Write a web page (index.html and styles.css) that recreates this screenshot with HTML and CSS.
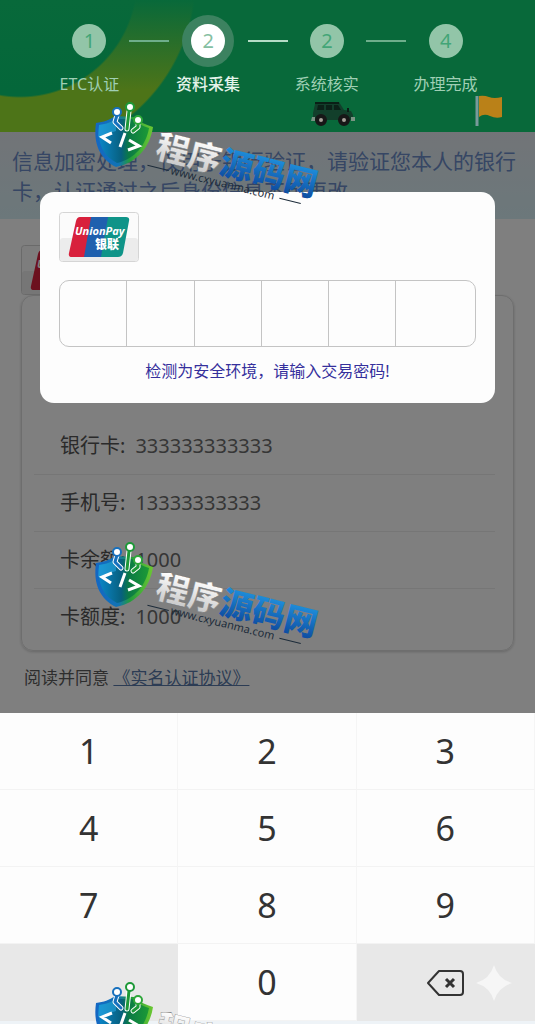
FILE: index.html
```html
<!DOCTYPE html>
<html lang="zh-CN">
<head>
    <meta charset="utf-8">
    <meta name="viewport" content="width=device-width, initial-scale=1.0">
    <title>资料采集</title>
    <link rel="stylesheet" href="styles.css">
</head>
<body>
    <!-- shared drawings -->
    <svg class="defs" aria-hidden="true">
        <defs>
            <linearGradient id="shield-fill" x1="0" y1="0" x2="1" y2="0">
                <stop offset="0" stop-color="#0b86c9"/>
                <stop offset="0.45" stop-color="#07607f"/>
                <stop offset="0.6" stop-color="#0b7a45"/>
                <stop offset="1" stop-color="#1c9a35"/>
            </linearGradient>
            <linearGradient id="shield-edge" x1="0" y1="0" x2="1" y2="0">
                <stop offset="0" stop-color="#1467c4"/>
                <stop offset="0.4" stop-color="#1273b5"/>
                <stop offset="0.6" stop-color="#229b3c"/>
                <stop offset="1" stop-color="#6cc832"/>
            </linearGradient>
            <linearGradient id="silver" x1="0" y1="0" x2="0" y2="1">
                <stop offset="0.2" stop-color="#ffffff"/>
                <stop offset="1" stop-color="#bdbdbd"/>
            </linearGradient>
            <linearGradient id="blue" x1="0" y1="0" x2="0" y2="1">
                <stop offset="0.2" stop-color="#1f8fdc"/>
                <stop offset="1" stop-color="#0a3f95"/>
            </linearGradient>
        </defs>
        <symbol id="shield" viewBox="0 0 80 80">
            <path d="M16 23C24 22 29 20 35 16L54 17C60 22 66 25 73 27C70 47 57 63 36 67C20 59 13 44 16 23Z" fill="url(#shield-edge)"/>
            <path d="M19 25C27 24 31 22 36 19L52 19C58 24 63 26 69 28C66 45 55 59 37 63C23 56 17 43 19 25Z" fill="url(#shield-fill)"/>
            <path d="M19 25C27 24 31 22 36 19V31L18 37Z" fill="#27a5df" opacity="0.6"/>
            <g fill="none" stroke-linecap="round" stroke-linejoin="round">
                <path d="M37 15L35 22L41 28M49 11L47 29M58 23V27L53 31" stroke="#fff" stroke-width="5"/>
                <path d="M37 15L35 22L41 28" stroke="#1770bd" stroke-width="3"/>
                <path d="M49 11L47 29M58 23V27L53 31" stroke="#1d9938" stroke-width="3"/>
            </g>
            <g fill="#fff" stroke-width="2">
                <circle cx="37" cy="12" r="4" stroke="#1770bd"/>
                <circle cx="50" cy="7" r="4" stroke="#1d9938"/>
                <circle cx="58" cy="20" r="4" stroke="#2ea63a"/>
            </g>
            <path d="M32 33L22 37L31 43M45 33L40 47M49 40L59 46L48 50" fill="none" stroke="#fff" stroke-width="3"/>
        </symbol>
        <symbol id="unionpay" viewBox="0 0 80 50">
            <rect x="0.5" y="0.5" width="79" height="49" rx="3" fill="#fbfbfb" stroke="#d5d5d5"/>
            <rect x="1" y="26" width="78" height="23" rx="3" fill="#ececec"/>
            <path d="M21 5H33L27 45H13Q9 45 10 41L17 9Q18 5 21 5Z" fill="#d8203c"/>
            <path d="M32 5H50L44 45H25Z" fill="#1f60ae"/>
            <path d="M49 5H67Q71 5 70 9L64 41Q63 45 59 45H42Z" fill="#0f9488"/>
            <text x="16" y="23" class="logo-en">UnionPay</text>
            <text x="36" y="37" class="logo-cn">银联</text>
        </symbol>
    </svg>

    <header class="header">
        <ol class="steps">
            <li class="step"><span class="num">1</span><span class="name">ETC认证</span></li>
            <li class="step active"><span class="num">2</span><span class="name">资料采集</span></li>
            <li class="step"><span class="num">2</span><span class="name">系统核实</span></li>
            <li class="step"><span class="num">4</span><span class="name">办理完成</span></li>
        </ol>
        <svg class="car" viewBox="0 0 46 28" aria-hidden="true">
            <path d="M5 4Q6 2 9 2H29L34 10L41 11L43 15V20H3V13Z" fill="#123f2b"/>
            <path d="M8 5H14V10H7ZM16 5H22V10H16ZM24 5H28L31 10H24Z" fill="#0b2118"/>
            <path d="M5 3H29M38 8V12" stroke="#0a1f16" stroke-width="2"/>
            <path d="M2 17H5V21H1ZM41 17H45V21H41Z" fill="#7a9484"/>
            <g fill="#a9a39b" stroke="#171717" stroke-width="4">
                <circle cx="11" cy="20" r="4"/>
                <circle cx="34" cy="20" r="4"/>
            </g>
        </svg>
        <svg class="flag" viewBox="0 0 28 32" aria-hidden="true">
            <path d="M2 1V31" stroke="#789a9b" stroke-width="3"/>
            <path d="M4 1Q9 0 14 2T27 2V22Q21 24 15 21T4 22Z" fill="#ba8118"/>
        </svg>
    </header>

    <main class="main">
        <p class="notice">信息加密处理，仅用于银行验证，请验证您本人的银行卡，认证通过之后身份信息不可更改</p>
        <svg class="back-logo" aria-hidden="true"><use href="#unionpay"/></svg>
        <dl class="info">
            <div class="row"><dt>银行卡:</dt><dd>333333333333</dd></div>
            <div class="row"><dt>手机号:</dt><dd>13333333333</dd></div>
            <div class="row"><dt>卡余额:</dt><dd>1000</dd></div>
            <div class="row"><dt>卡额度:</dt><dd>1000</dd></div>
        </dl>
        <p class="agree">阅读并同意 <a href="#">《实名认证协议》</a></p>

        <div class="mask"></div>
        <section class="dialog">
            <svg class="logo" role="img" aria-label="UnionPay 银联"><use href="#unionpay"/></svg>
            <div class="cells">
                <input type="text" aria-label="第1位" readonly>
                <input type="text" aria-label="第2位" readonly>
                <input type="text" aria-label="第3位" readonly>
                <input type="text" aria-label="第4位" readonly>
                <input type="text" aria-label="第5位" readonly>
                <input type="text" aria-label="第6位" readonly>
            </div>
            <p class="tip">检测为安全环境，请输入交易密码!</p>
        </section>
    </main>

    <div class="keypad">
        <button type="button">1</button>
        <button type="button">2</button>
        <button type="button">3</button>
        <button type="button">4</button>
        <button type="button">5</button>
        <button type="button">6</button>
        <button type="button">7</button>
        <button type="button">8</button>
        <button type="button">9</button>
        <span class="blank"></span>
        <button type="button">0</button>
        <button type="button" class="del" aria-label="删除">
            <svg class="del-icon" viewBox="0 0 40 28">
                <path d="M13 2H34Q37 2 37 5V23Q37 26 34 26H13L2 14Z" fill="none" stroke="#333" stroke-width="2" stroke-linejoin="round"/>
                <path d="M20 10L28 18M28 10L20 18" stroke="#333" stroke-width="3"/>
            </svg>
            <svg class="spark" viewBox="0 0 36 36">
                <path d="M18 0Q22 14 36 18Q22 22 18 36Q14 22 0 18Q14 14 18 0Z" fill="#f6f6f6"/>
            </svg>
        </button>
    </div>

    <div class="watermarks">
        <svg class="mark" viewBox="0 0 250 110">
            <use href="#shield" width="80" height="80"/>
            <g transform="translate(74 57) rotate(14)">
                <text class="mark-title"><tspan class="silver">程序</tspan><tspan class="blue">源码网</tspan></text>
            </g>
            <g transform="translate(90 74) rotate(14)">
                <text class="mark-url">www.cxyuanma.com</text>
                <path d="M-24 -3H-2M112 -3H134" stroke="#1d2c3a"/>
            </g>
        </svg>
        <svg class="mark" viewBox="0 0 250 110">
            <use href="#shield" width="80" height="80"/>
            <g transform="translate(74 57) rotate(14)">
                <text class="mark-title"><tspan class="silver">程序</tspan><tspan class="blue">源码网</tspan></text>
            </g>
            <g transform="translate(90 74) rotate(14)">
                <text class="mark-url">www.cxyuanma.com</text>
                <path d="M-24 -3H-2M112 -3H134" stroke="#1d2c3a"/>
            </g>
        </svg>
        <svg class="mark" viewBox="0 0 250 110" aria-hidden="true">
            <use href="#shield" width="80" height="80"/>
            <g transform="translate(74 57) rotate(14)">
                <text class="mark-title"><tspan class="silver">程序</tspan></text>
            </g>
        </svg>
    </div>
</body>
</html>
```
FILE: styles.css
```css
* {
    box-sizing: border-box;
}

body {
    margin: 0;
    position: relative;
    min-height: 100vh;
    display: flex;
    flex-direction: column;
    font-family: "Noto Sans", "Noto Sans CJK SC", sans-serif;
    background-color: #eef3f7;
}

p,
dl,
dd,
ol {
    margin: 0;
    padding: 0;
}

.defs {
    position: absolute;
    width: 0;
    height: 0;
}

.header {
    position: relative;
    height: 132px;
    padding: 14px 30px 0;
    background:
        linear-gradient(#08693a, rgba(8, 105, 58, 0) 90px),
        radial-gradient(circle at 20px -20px, #04673a 116px, #4d7418 118px, #4d7418 174px, #08693a 176px);
}

.steps {
    display: grid;
    grid-template-columns: repeat(4, 1fr);
    list-style: none;
}

.step {
    position: relative;
    display: flex;
    flex-direction: column;
    align-items: center;
    gap: 4px;
    color: #9fcfb4;
    font-size: 16px;
    line-height: 24px;
}

.num {
    width: 34px;
    height: 34px;
    margin: 10px;
    border-radius: 50%;
    background-color: #92c5a8;
    color: #43a577;
    font-size: 20px;
    line-height: 34px;
    text-align: center;
}

.step + .step::before {
    content: "";
    position: absolute;
    top: 26px;
    left: -20px;
    width: 40px;
    height: 2px;
    background-color: #6eae8b;
}

.step.active + .step::before {
    background-color: #b5dcc6;
}

.active {
    color: #e4f3ea;
    font-weight: 500;
}

.active .num {
    background-color: #fff;
    color: #86bfa2;
    box-shadow: 0 0 0 9px #3c8260;
    font-weight: 400;
}

.car {
    position: absolute;
    left: 58%;
    bottom: 4px;
    width: 46px;
    height: 28px;
}

.flag {
    position: absolute;
    right: 32px;
    bottom: 5px;
    width: 28px;
    height: 32px;
}

.main {
    position: relative;
    flex: 1;
    background-color: #fff;
}

.notice {
    padding: 14px 8px 13px 12px;
    background: linear-gradient(#e4e9f0, #d8f0f6);
    color: #6c8cc8;
    font-size: 21px;
    line-height: 30px;
}

.back-logo {
    display: block;
    width: 80px;
    height: 50px;
    margin: 26px 21px 0;
}

.info {
    margin: 0 21px;
    padding: 122px 18px 5px 12px;
    border: 1px solid #dcdcdc;
    border-radius: 12px;
    box-shadow: 0 1px 3px rgba(0, 0, 0, 0.2);
    color: #555;
    font-size: 20px;
}

.row {
    display: flex;
    gap: 10px;
    padding-left: 26px;
    line-height: 56px;
    border-bottom: 1px solid #ececec;
}

.row:last-child {
    border-bottom: none;
}

.row dd {
    color: #6c6c6c;
}

.agree {
    padding: 14px 24px 22px;
    color: #5c5c5c;
    font-size: 17px;
    line-height: 26px;
}

.agree a {
    color: #5878a8;
}

.mask {
    position: absolute;
    inset: 0;
    background-color: rgba(0, 0, 0, 0.5);
}

.dialog {
    position: absolute;
    top: 60px;
    left: 40px;
    right: 40px;
    padding: 20px 19px;
    border-radius: 14px;
    background-color: #fdfdfd;
}

.logo {
    display: block;
    width: 80px;
    height: 50px;
}

.cells {
    display: grid;
    grid-template-columns: repeat(5, 6fr) 7fr;
    margin-top: 18px;
    border: 1px solid #c4c4c4;
    border-radius: 10px;
    overflow: hidden;
}

.cells input {
    width: 100%;
    height: 65px;
    padding: 0;
    border: none;
    border-right: 1px solid #c4c4c4;
    background: none;
    outline: none;
}

.cells input:last-child {
    border-right: none;
}

.tip {
    margin-top: 12px;
    color: #35309c;
    font-size: 16px;
    line-height: 24px;
    text-align: center;
}

.keypad {
    display: grid;
    grid-template-columns: repeat(3, 1fr);
    margin-bottom: 3px;
}

.keypad button,
.blank {
    height: 77px;
    padding: 0;
    border: none;
    border-right: 1px solid #f5f5f5;
    border-bottom: 1px solid #f3f3f3;
    background-color: #fdfdfd;
    color: #333;
    font-family: inherit;
    font-size: 34px;
}

.keypad .blank,
.keypad .del {
    border: none;
    background-color: #e8e8e8;
}

.keypad .del {
    position: relative;
}

.del-icon {
    display: block;
    width: 40px;
    height: 28px;
    margin: 0 auto;
}

.spark {
    position: absolute;
    top: 21px;
    right: 23px;
    width: 36px;
    height: 36px;
}

/* site watermark, repeated down the page */
.watermarks {
    position: absolute;
    inset: 0;
    display: flex;
    flex-direction: column;
    gap: 330px;
    padding: 100px 0 0 80px;
    overflow: hidden;
    pointer-events: none;
}

.mark {
    flex: none;
    width: 250px;
    height: 110px;
}

.mark-title {
    font-family: "Noto Sans CJK SC", sans-serif;
    font-size: 33px;
    font-weight: 900;
}

.silver {
    fill: url(#silver);
    stroke: #666;
    stroke-width: 0.3px;
}

.blue {
    fill: url(#blue);
}

.mark-url {
    fill: #1d2c3a;
    font-size: 11px;
}

.logo-en {
    fill: #fff;
    font-size: 11px;
    font-weight: 700;
    font-style: italic;
}

.logo-cn {
    fill: #fff;
    font-size: 12px;
    font-weight: 900;
}
```
